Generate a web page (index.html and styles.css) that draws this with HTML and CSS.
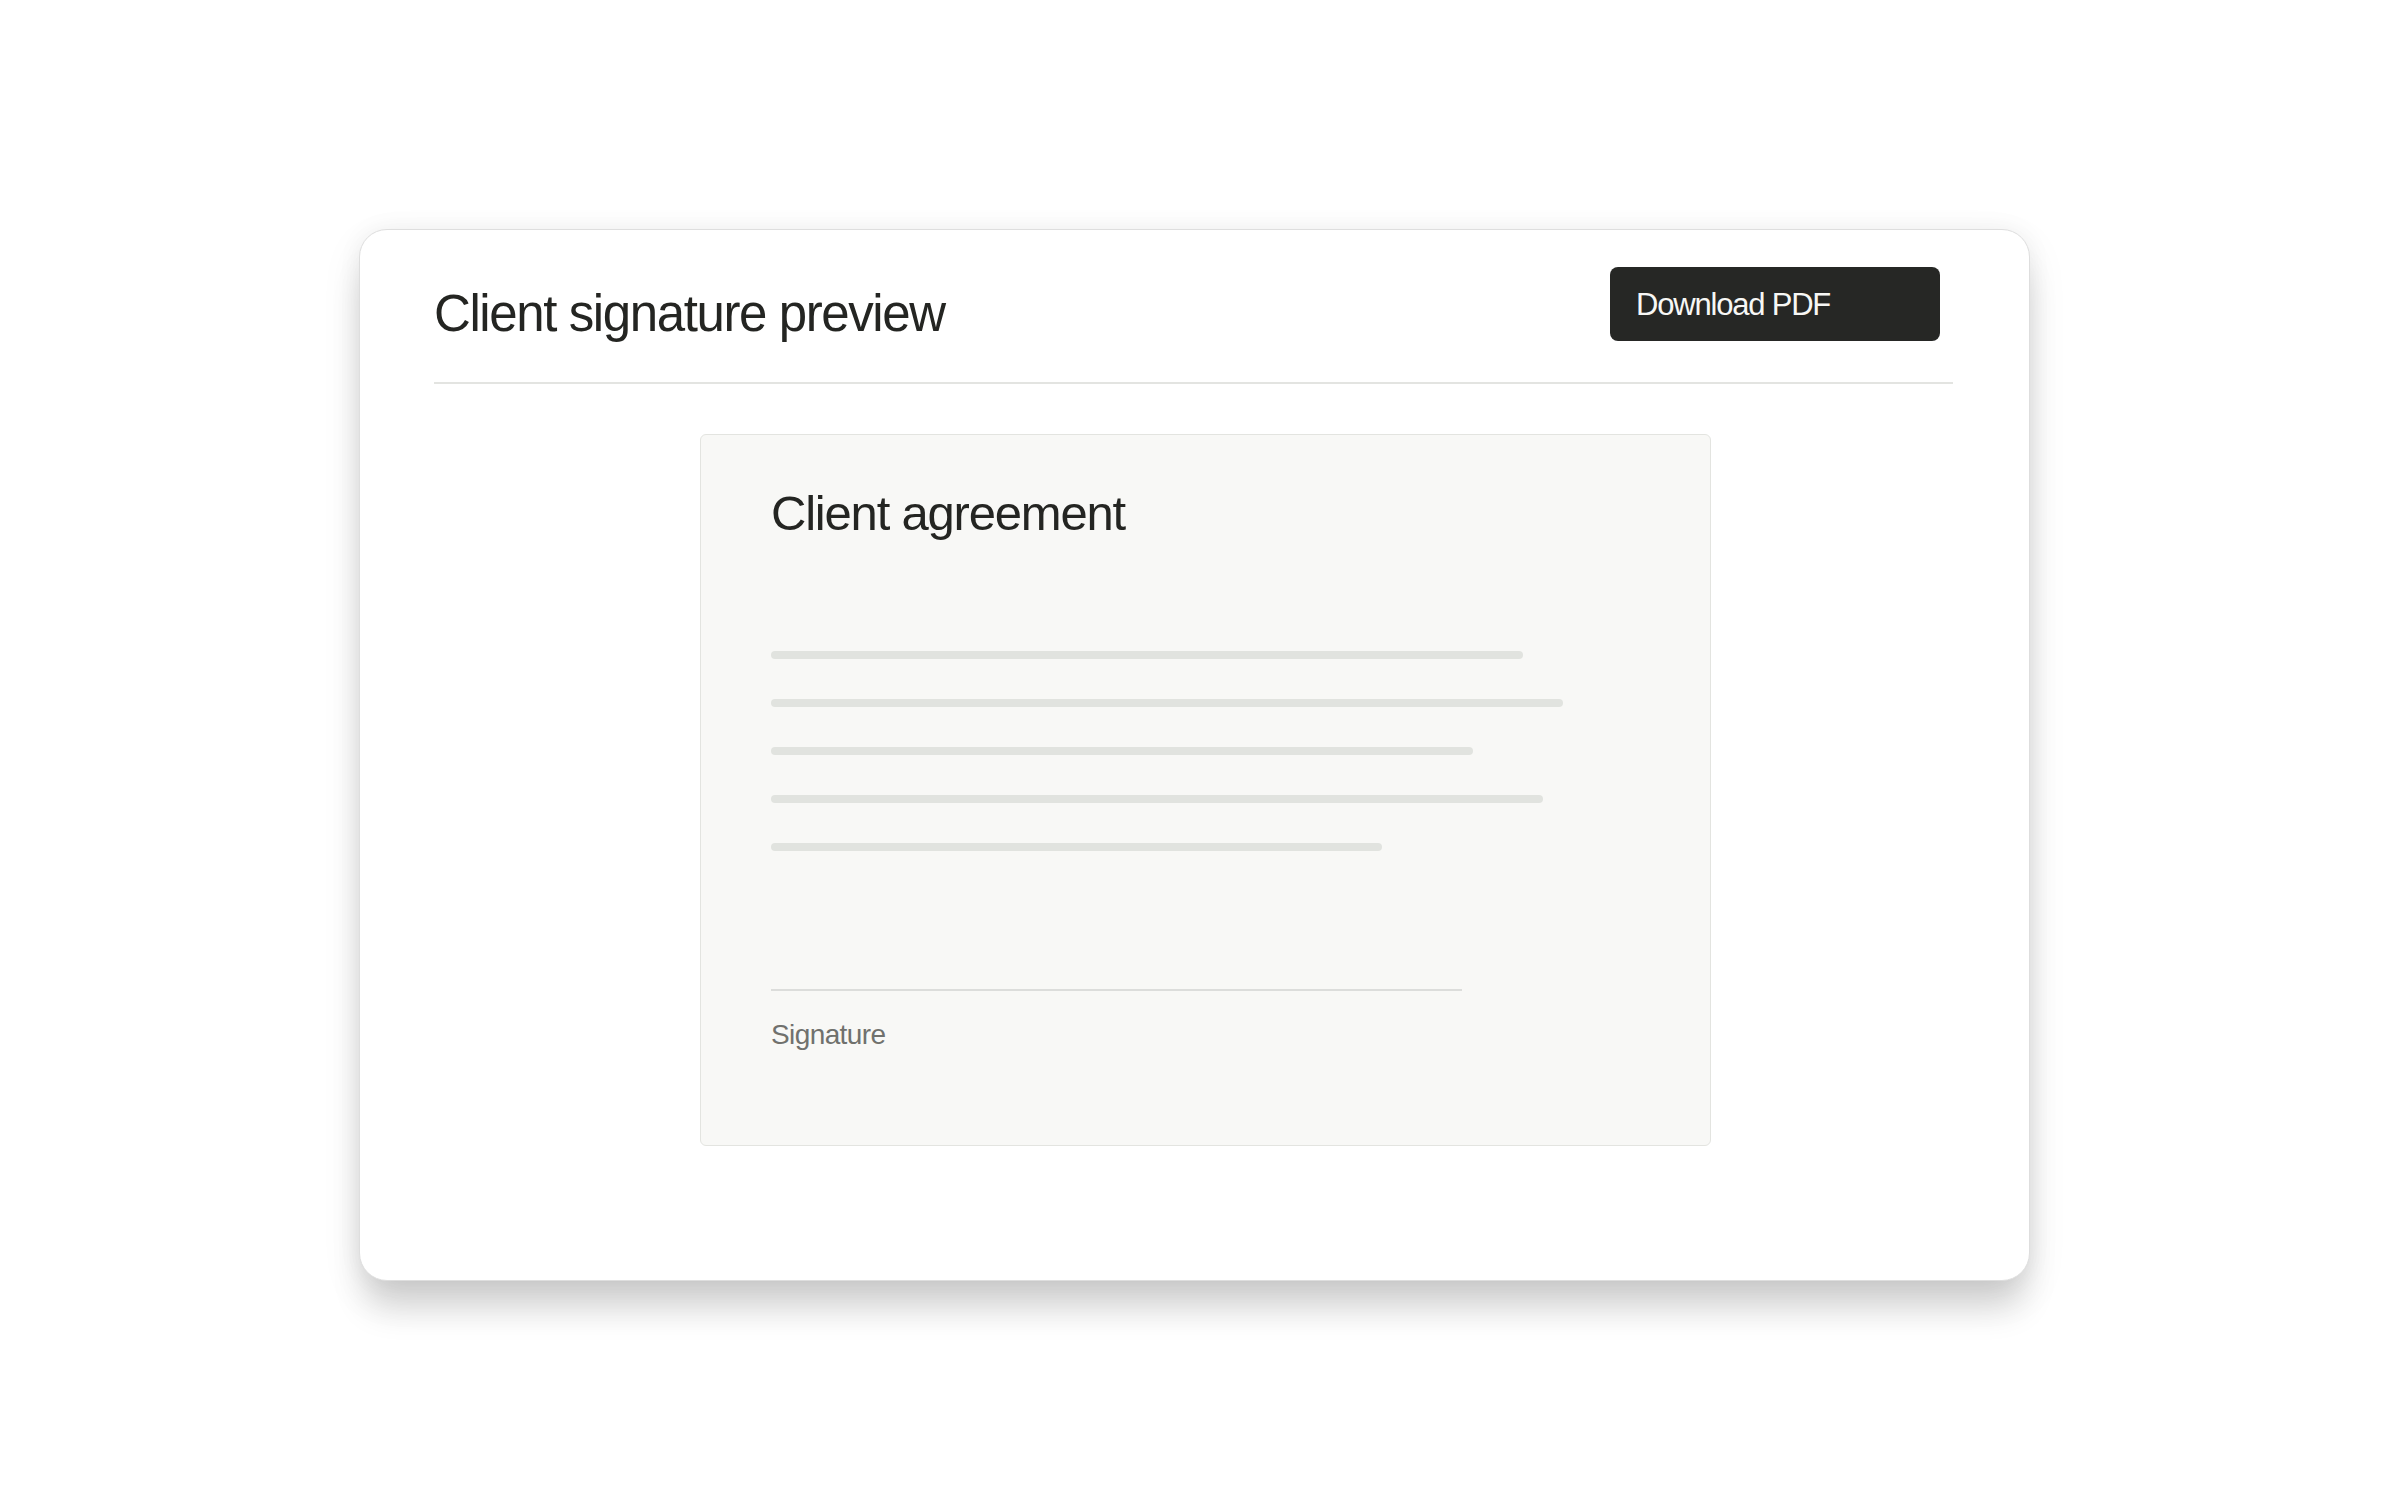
FILE: index.html
```html
<!DOCTYPE html>
<html lang="en">
<head>
<meta charset="utf-8">
<title>Client signature preview</title>
<link rel="stylesheet" href="styles.css">
</head>
<body>
<main class="page">
  <section class="card">
    <header class="card-header">
      <h1 class="card-title">Client signature preview</h1>
      <button class="btn-download" type="button">Download PDF</button>
    </header>
    <div class="card-body">
      <article class="doc">
        <h2 class="doc-title">Client agreement</h2>
        <div class="doc-lines">
          <span class="doc-line" style="width:752px"></span>
          <span class="doc-line" style="width:792px"></span>
          <span class="doc-line" style="width:702px"></span>
          <span class="doc-line" style="width:772px"></span>
          <span class="doc-line" style="width:611px"></span>
        </div>
        <div class="sig-line"></div>
        <p class="sig-label">Signature</p>
      </article>
    </div>
  </section>
</main>
</body>
</html>
```
FILE: styles.css
```css
html, body {
  margin: 0;
  padding: 0;
  background: #ffffff;
}

body {
  font-family: "Liberation Sans", Arial, sans-serif;
  color: #222320;
}

.page {
  min-height: 1500px;
  box-sizing: border-box;
  padding: 229px 0 0 359px;
}

.card {
  box-sizing: border-box;
  width: 1671px;
  background: #ffffff;
  border: 1px solid #dedede;
  border-radius: 28px;
  padding: 0 76px 134px 74px;
  box-shadow: 0 34px 34px -6px rgba(0, 0, 0, 0.14), 0 14px 40px rgba(0, 0, 0, 0.08), 0 0 24px rgba(0, 0, 0, 0.05);
}

.card-header {
  display: flex;
  justify-content: space-between;
  align-items: flex-start;
  padding: 37px 13px 38px 0;
  border-bottom: 2px solid #e3e4e1;
}

.card-title {
  margin: 16px 0 0 0;
  font-size: 51px;
  line-height: 1.2;
  font-weight: 400;
  letter-spacing: -1.4px;
  color: #242522;
}

.btn-download {
  box-sizing: border-box;
  width: 330px;
  height: 74px;
  display: flex;
  align-items: center;
  padding: 2px 0 0 26px;
  margin: 0;
  border: none;
  border-radius: 8px;
  background: #262725;
  color: #f7f7f5;
  font-family: "Liberation Sans", Arial, sans-serif;
  font-size: 31px;
  line-height: 1.2;
  letter-spacing: -1.2px;
  text-align: left;
  cursor: pointer;
}

.card-body {
  display: flex;
  justify-content: center;
  padding: 50px 0 0 24px;
}

.doc {
  box-sizing: border-box;
  width: 1011px;
  display: flex;
  flex-direction: column;
  align-items: flex-start;
  padding: 49px 72px 93px 70px;
  background: #f8f8f6;
  border: 1px solid #e3e4e0;
  border-radius: 6px;
}

.doc-title {
  margin: 0;
  font-size: 49px;
  line-height: 1.2;
  font-weight: 400;
  letter-spacing: -1.2px;
  color: #242522;
}

.doc-lines {
  display: flex;
  flex-direction: column;
  gap: 40px;
  margin-top: 108px;
}

.doc-line {
  display: block;
  height: 8px;
  border-radius: 4px;
  background: #e1e3df;
}

.sig-line {
  width: 691px;
  height: 2px;
  margin-top: 138px;
  background: #dcdddb;
}

.sig-label {
  margin: 27px 0 0 0;
  font-size: 28px;
  line-height: 1.2;
  letter-spacing: -0.6px;
  color: #70716d;
}
```
